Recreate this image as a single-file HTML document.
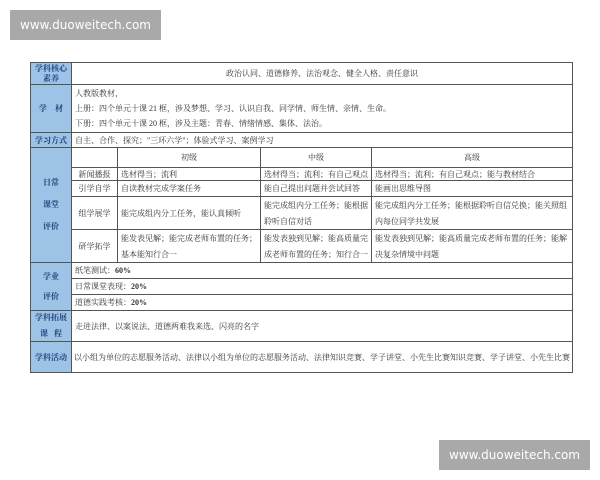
<!DOCTYPE html>
<html><head><meta charset="utf-8"><style>
body{margin:0;width:600px;height:480px;background:#fff;position:relative;overflow:hidden;font-family:"Liberation Serif","Noto Serif CJK SC",serif;color:#333}
.c{position:absolute;box-sizing:border-box;border:1px solid #555;font-size:8px;line-height:13px;padding:1px 3px;background:#fff;overflow:hidden;white-space:nowrap}
.b{background:#9dc3e6;color:#1f3f7a;font-weight:bold;text-align:center;display:flex;align-items:center;justify-content:center;white-space:normal}
.m{display:flex;align-items:center}
.ctr{justify-content:center}
.wm{position:absolute;background:#a9a9a9;color:#fff;font-family:"DejaVu Sans","Liberation Sans",sans-serif;font-size:12px;line-height:30px;text-align:center;width:151px;height:30px}
</style></head><body>
<div class="wm" style="left:10px;top:10px">www.duoweitech.com</div>
<div class="wm" style="left:439px;top:440px">www.duoweitech.com</div>

<div class="c b" style="left:30px;top:62px;width:42px;height:23px;line-height:10px">学科核心<br>素养</div>
<div class="c m ctr" style="left:71px;top:62px;width:502px;height:23px">政治认同、道德修养、法治观念、健全人格、责任意识</div>

<div class="c b" style="left:30px;top:84px;width:42px;height:49px">学&nbsp;&nbsp;&nbsp;&nbsp;材</div>
<div class="c" style="left:71px;top:84px;width:502px;height:49px;line-height:15px;padding-top:1px">人教版教材，<br>上册：四个单元十课 21 框，涉及梦想、学习、认识自我、同学情、师生情、亲情、生命。<br>下册：四个单元十课 20 框，涉及主题：青春、情绪情感、集体、法治。</div>

<div class="c b" style="left:30px;top:132px;width:42px;height:16px">学习方式</div>
<div class="c m" style="left:71px;top:132px;width:502px;height:16px">自主、合作、探究；"三环六学"；体验式学习、案例学习</div>

<div class="c b" style="left:30px;top:147px;width:42px;height:116px;line-height:22px">日常<br>课堂<br>评价</div>
<div class="c" style="left:71px;top:147px;width:47px;height:21px"></div>
<div class="c m ctr" style="left:117px;top:147px;width:144px;height:21px">初级</div>
<div class="c m ctr" style="left:260px;top:147px;width:112px;height:21px">中级</div>
<div class="c m ctr" style="left:371px;top:147px;width:202px;height:21px">高级</div>

<div class="c m ctr" style="left:71px;top:167px;width:47px;height:14px">新闻播报</div>
<div class="c m" style="left:117px;top:167px;width:144px;height:14px">选材得当；流利</div>
<div class="c m" style="left:260px;top:167px;width:112px;height:14px">选材得当；流利；有自己观点</div>
<div class="c m" style="left:371px;top:167px;width:202px;height:14px">选材得当；流利；有自己观点；能与教材结合</div>

<div class="c m ctr" style="left:71px;top:180px;width:47px;height:17px">引学自学</div>
<div class="c m" style="left:117px;top:180px;width:144px;height:17px">自读教材完成学案任务</div>
<div class="c m" style="left:260px;top:180px;width:112px;height:17px">能自己提出问题并尝试回答</div>
<div class="c m" style="left:371px;top:180px;width:202px;height:17px">能画出思维导图</div>

<div class="c m ctr" style="left:71px;top:196px;width:47px;height:34px">组学展学</div>
<div class="c m" style="left:117px;top:196px;width:144px;height:34px">能完成组内分工任务，能认真倾听</div>
<div class="c" style="left:260px;top:196px;width:112px;height:34px;line-height:16px">能完成组内分工任务；能根据<br>聆听自信对话</div>
<div class="c" style="left:371px;top:196px;width:202px;height:34px;line-height:16px">能完成组内分工任务；能根据聆听自信兑换；能关照组<br>内每位同学共发展</div>

<div class="c m ctr" style="left:71px;top:229px;width:47px;height:34px">研学拓学</div>
<div class="c" style="left:117px;top:229px;width:144px;height:34px;line-height:16px">能发表见解；能完成老师布置的任务；<br>基本能知行合一</div>
<div class="c" style="left:260px;top:229px;width:112px;height:34px;line-height:16px">能发表独到见解；能高质量完<br>成老师布置的任务；知行合一</div>
<div class="c" style="left:371px;top:229px;width:202px;height:34px;line-height:16px">能发表独到见解；能高质量完成老师布置的任务；能解<br>决复杂情境中问题</div>

<div class="c b" style="left:30px;top:262px;width:42px;height:49px;line-height:20px">学业<br>评价</div>
<div class="c m" style="left:71px;top:262px;width:502px;height:17px">纸笔测试：<b>60%</b></div>
<div class="c m" style="left:71px;top:278px;width:502px;height:17px">日常课堂表现：<b>20%</b></div>
<div class="c m" style="left:71px;top:294px;width:502px;height:17px">道德实践考核：<b>20%</b></div>

<div class="c b" style="left:30px;top:310px;width:42px;height:32px;line-height:16px">学科拓展<br>课&nbsp;&nbsp;&nbsp;程</div>
<div class="c m" style="left:71px;top:310px;width:502px;height:32px">走进法律、以案说法、道德两难我来选、闪亮的名字</div>

<div class="c b" style="left:30px;top:341px;width:42px;height:32px">学科活动</div>
<div class="c m" style="left:71px;top:341px;width:502px;height:32px;font-size:8px;padding:1px 2px">以小组为单位的志愿服务活动、法律以小组为单位的志愿服务活动、法律知识竞赛、学子讲堂、小先生比赛知识竞赛、学子讲堂、小先生比赛</div>
</body></html>
